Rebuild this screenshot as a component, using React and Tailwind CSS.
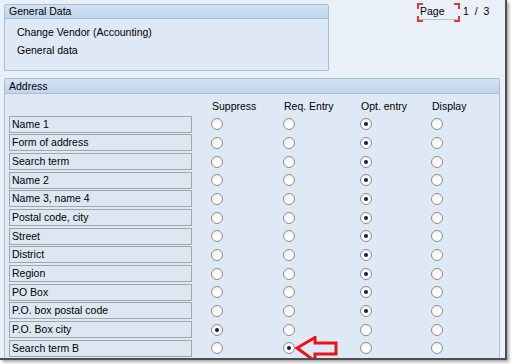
import React from "react";

const rows = [
  { label: "Name 1", value: 2 },
  { label: "Form of address", value: 2 },
  { label: "Search term", value: 2 },
  { label: "Name 2", value: 2 },
  { label: "Name 3, name 4", value: 2 },
  { label: "Postal code, city", value: 2 },
  { label: "Street", value: 2 },
  { label: "District", value: 2 },
  { label: "Region", value: 2 },
  { label: "PO Box", value: 2 },
  { label: "P.O. box postal code", value: 2 },
  { label: "P.O. Box city", value: 0 },
  { label: "Search term B", value: 1 },
  { label: "", value: -1 },
];

const columns = [
  { title: "Suppress", width: "w-[72px]" },
  { title: "Req. Entry", width: "w-[77px]" },
  { title: "Opt. entry", width: "w-[71px]" },
  { title: "Display", width: "w-[60px]" },
];

function Radio({ checked }) {
  return (
    <div className="w-[12px] h-[12px] rounded-full border border-[#8d8d8d] bg-gradient-to-b from-[#f4f4f4] to-[#ffffff] flex items-center justify-center">
      {checked && <div className="w-[4px] h-[4px] rounded-full bg-[#1c1c3c]" />}
    </div>
  );
}

function Corner({ className }) {
  return <div className={`absolute w-[6px] h-[6px] border-[#e0383c] ${className}`} />;
}

export default function App() {
  return (
    <div className="w-[512px] h-[364px] bg-white overflow-hidden" style={{ fontFamily: '"Liberation Sans", Arial, sans-serif' }}>
      <div className="w-[507px] h-[360px] bg-[#eaf0f7] border-r-2 border-b-2 border-[#4e4e52] shadow-[2px_2px_3px_rgba(0,0,0,0.35)] overflow-hidden text-[10.5px] text-black">
        {/* Top: general data + page */}
        <div className="flex pt-[4px] pl-[4px]">
          <div className="w-[325px] h-[67px] border border-[#a6bfdc] rounded-t-[2px] bg-[#dfe9f5]">
            <div className="h-[14px] pl-[4px] leading-[13px] bg-gradient-to-b from-[#d3e2f2] to-[#c1d6ec] border-b border-[#a6bfdc]">General Data</div>
            <div className="pl-[12px] pt-[4px] leading-[18px]">
              <div>Change Vendor (Accounting)</div>
              <div>General data</div>
            </div>
          </div>
          <div className="flex items-start ml-[88px] -mt-[1px]">
            <div className="relative w-[43px] h-[19px] pl-[3px] pt-[2px] leading-[13px]">
              Page
              <div className="absolute left-[2px] right-[2px] bottom-[2px] h-[1px] bg-[#c0c4c8]" />
              <Corner className="left-0 top-0 border-l-2 border-t-2" />
              <Corner className="right-0 top-0 border-r-2 border-t-2" />
              <Corner className="left-0 bottom-0 border-l-2 border-b-2" />
              <Corner className="right-0 bottom-0 border-r-2 border-b-2" />
            </div>
            <div className="ml-[3px] pt-[2px] leading-[13px] whitespace-pre">1  /  3</div>
          </div>
        </div>

        {/* Address */}
        <div className="ml-[4px] mt-[7px] w-[496px] h-[300px] border border-[#a6bfdc] rounded-t-[2px] bg-[#dfe9f5]">
          <div className="h-[15px] pl-[4px] leading-[14px] bg-gradient-to-b from-[#d3e2f2] to-[#c1d6ec] border-b border-[#a6bfdc]">Address</div>
          <div className="flex pl-[4px] pt-[6px] h-[21px]">
            <div className="w-[183px]" />
            <div className="flex ml-[19px]">
              {columns.map((c) => (
                <div key={c.title} className={`${c.width} pl-[1px] leading-[13px]`}>{c.title}</div>
              ))}
            </div>
          </div>
          <div className="pl-[4px]">
            {rows.map((r, i) => (
              <div key={i} className="flex items-center h-[18.67px]">
                <div className="w-[183px] h-[17px] border border-[#a3a5a8] bg-[#dde7f2] pl-[2px] leading-[15px] whitespace-nowrap">{r.label}</div>
                {r.value >= 0 && (
                  <div className="flex ml-[19px]">
                    {columns.map((c, j) => (
                      <div key={c.title} className={c.width}>
                        <div className="relative">
                          <Radio checked={r.value === j} />
                          {i === 12 && j === 1 && (
                            <svg className="absolute left-[12px] -top-[6px]" width="44" height="28" viewBox="0 0 44 28">
                              <path d="M2 12 L20 1.5 L20 7 L41 7 L41 18 L20 18 L20 25 Z" fill="none" stroke="#e8141c" strokeWidth="3" strokeLinejoin="miter" />
                            </svg>
                          )}
                        </div>
                      </div>
                    ))}
                  </div>
                )}
              </div>
            ))}
          </div>
        </div>
      </div>
    </div>
  );
}
